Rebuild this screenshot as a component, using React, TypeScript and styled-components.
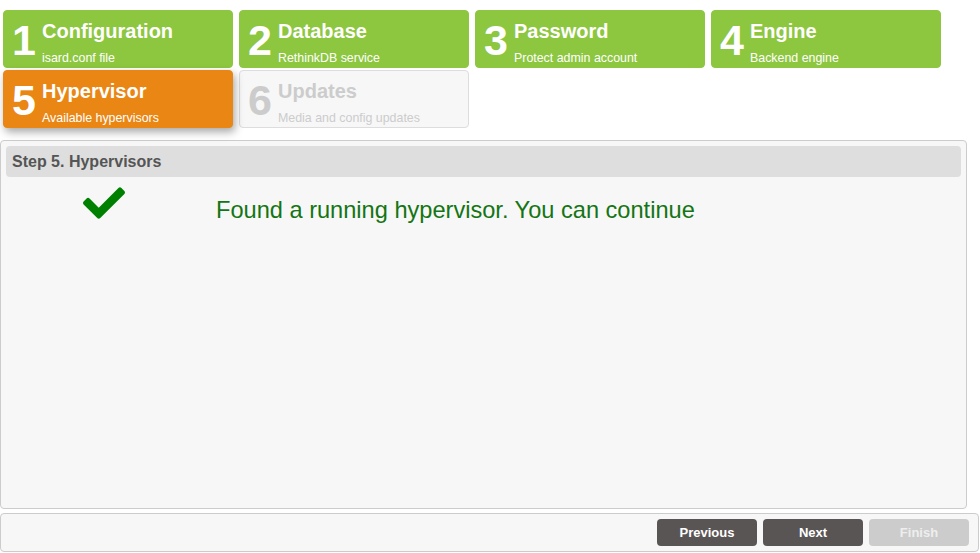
import styled, {createGlobalStyle} from 'styled-components';

const GlobalStyle = createGlobalStyle`
  body {
    margin: 0;
    background: #FFFFFF;
    font-family: "Liberation Sans", Arial, sans-serif;
  }
`;

type StepState = 'done' | 'active' | 'disabled';

type StepData = {
  number: number,
  title: string,
  subtitle: string,
  state: StepState,
};

const steps: StepData[] = [
  {number: 1, title: 'Configuration', subtitle: 'isard.conf file', state: 'done'},
  {number: 2, title: 'Database', subtitle: 'RethinkDB service', state: 'done'},
  {number: 3, title: 'Password', subtitle: 'Protect admin account', state: 'done'},
  {number: 4, title: 'Engine', subtitle: 'Backend engine', state: 'done'},
  {number: 5, title: 'Hypervisor', subtitle: 'Available hypervisors', state: 'active'},
  {number: 6, title: 'Updates', subtitle: 'Media and config updates', state: 'disabled'},
];

const CheckIcon = () => (
  <svg width="42" height="42" viewBox="0 0 512 512" fill="#008000">
    <path d="M173.898 439.404l-166.4-166.4c-9.997-9.997-9.997-26.206 0-36.204l36.203-36.204c9.997-9.998 26.207-9.998 36.204 0L192 312.69 432.095 72.596c9.997-9.997 26.207-9.997 36.204 0l36.203 36.204c9.997 9.997 9.997 26.206 0 36.204l-294.4 294.401c-9.998 9.997-26.207 9.997-36.204-.001z" />
  </svg>
);

const App = () => (
  <Page>
    <GlobalStyle />
    <StepList>
      {steps.map(step => (
        <Step key={step.number} $state={step.state}>
          <StepNumber>{step.number}</StepNumber>
          <StepText>
            <StepTitle>{step.title}</StepTitle>
            <StepSubtitle>{step.subtitle}</StepSubtitle>
          </StepText>
        </Step>
      ))}
    </StepList>
    <Panel>
      <PanelHeader>Step 5. Hypervisors</PanelHeader>
      <ResultRow>
        <IconCell>
          <CheckIcon />
        </IconCell>
        <ResultText>Found a running hypervisor. You can continue</ResultText>
      </ResultRow>
    </Panel>
    <Footer>
      <Button>Previous</Button>
      <Button>Next</Button>
      <Button disabled>Finish</Button>
    </Footer>
  </Page>
);

export default App;

const Page = styled.div`
  display: flex;
  flex-direction: column;
  width: 980px;
  height: 553px;
`;

const StepList = styled.div`
  display: flex;
  flex-wrap: wrap;
  width: 944px;
  padding-top: 9px;
`;

const stepColors = {
  done: {bg: '#8DC63F', border: '#8DC63F', color: '#FFFFFF', shadow: 'none'},
  active: {bg: '#E98614', border: '#E98614', color: '#FFFFFF', shadow: '2px 4px 8px rgba(0, 0, 0, 0.35)'},
  disabled: {bg: '#F7F7F7', border: '#DDDDDD', color: '#CCCCCC', shadow: 'none'},
};

const Step = styled.div<{$state: StepState}>`
  display: flex;
  align-items: flex-start;
  box-sizing: border-box;
  width: 230px;
  height: 58px;
  margin: 1px 3px;
  padding-left: 7px;
  border-radius: 4px;
  border: 1px solid ${p => stepColors[p.$state].border};
  background: ${p => stepColors[p.$state].bg};
  color: ${p => stepColors[p.$state].color};
  box-shadow: ${p => stepColors[p.$state].shadow};
  position: relative;
  z-index: ${p => (p.$state === 'active' ? 1 : 0)};
`;

const StepNumber = styled.div`
  width: 31px;
  margin-top: 8px;
  padding-left: 1px;
  box-sizing: border-box;
  font-size: 43px;
  font-weight: bold;
  line-height: 42px;
`;

const StepText = styled.div`
  display: flex;
  flex-direction: column;
  padding-top: 10px;
`;

const StepTitle = styled.div`
  font-size: 20px;
  font-weight: bold;
  line-height: 20px;
`;

const StepSubtitle = styled.div`
  margin-top: 10px;
  font-size: 12.4px;
  line-height: 14px;
`;

const Panel = styled.div`
  box-sizing: border-box;
  width: 967px;
  height: 369px;
  margin-top: 11px;
  padding: 5px;
  border: 1px solid #CCCCCC;
  border-radius: 4px;
  background: #F7F7F7;
`;

const PanelHeader = styled.div`
  height: 31px;
  padding-left: 6px;
  border-radius: 4px;
  background: #DEDEDE;
  color: #555555;
  font-size: 16px;
  font-weight: bold;
  line-height: 31px;
`;

const ResultRow = styled.div`
  display: flex;
  align-items: flex-start;
  padding-top: 5px;
`;

const IconCell = styled.div`
  box-sizing: border-box;
  width: 210px;
  padding-left: 77px;
`;

const ResultText = styled.div`
  margin-top: 14px;
  color: #147514;
  font-size: 23.6px;
  line-height: 28px;
`;

const Footer = styled.div`
  display: flex;
  justify-content: flex-end;
  gap: 6px;
  box-sizing: border-box;
  width: 979px;
  height: 39px;
  margin-top: 4px;
  padding: 5px 9px 5px 5px;
  border: 1px solid #CCCCCC;
  border-radius: 4px;
  background: #F7F7F7;
`;

const Button = styled.button`
  width: 100px;
  height: 27px;
  padding: 0;
  border: none;
  border-radius: 4px;
  background: #5A5555;
  color: #FFFFFF;
  font-family: "Liberation Sans", Arial, sans-serif;
  font-size: 13px;
  font-weight: bold;

  &:disabled {
    background: #CCCCCC;
    color: #EEEEEE;
  }
`;
